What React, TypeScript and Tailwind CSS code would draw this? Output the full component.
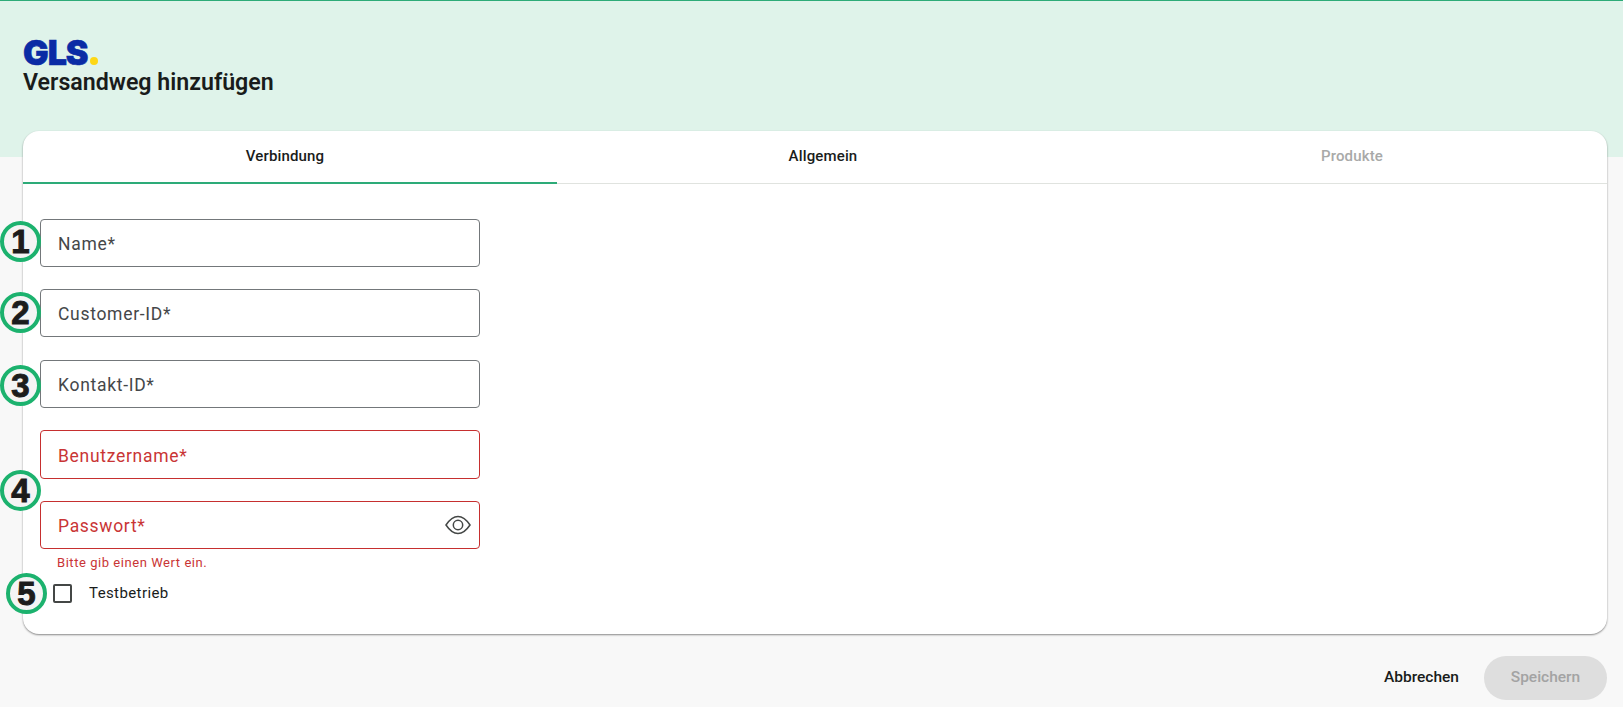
import React from "react";

function Badge({ n, className }: { n: string; className: string }) {
  return (
    <div
      className={
        "absolute flex items-center justify-center w-[41px] h-[41px] rounded-full border-[4px] border-[#1cb26e] bg-[#f4f4f4] text-[#1c1c1c] text-[33px] font-bold leading-none [-webkit-text-stroke:1px_#1c1c1c] [font-family:'Liberation_Sans',sans-serif] " +
        className
      }
    >
      {n}
    </div>
  );
}

function Field({ label, error, eye, className }: { label: string; error?: boolean; eye?: boolean; className: string }) {
  return (
    <div
      className={
        "relative flex items-center justify-between w-[440px] pl-[17px] pr-[8px] bg-white rounded-[4px] border text-[17.5px] tracking-[0.7px] " +
        (error ? "border-[#c62f2f] text-[#c93535] " : "border-[#73777a] text-[#454749] ") +
        className
      }
    >
      <span className="pt-[3px]">{label}</span>
      {eye && (
        <svg width="26" height="26" viewBox="0 0 26 26" fill="none" stroke="#444746" strokeWidth="1.5">
          <path d="M1 13 C 5 7 9 4.5 13 4.5 C 17 4.5 21 7 25 13 C 21 19 17 21.5 13 21.5 C 9 21.5 5 19 1 13 Z" />
          <circle cx="13" cy="13" r="4.7" />
        </svg>
      )}
    </div>
  );
}

export default function App() {
  return (
    <div className="relative h-[707px] w-full overflow-hidden bg-[#f8f8f8] [font-family:Roboto,sans-serif]">
      <header className="h-[157px] bg-[#dff3ea] border-t border-[#2dab78] pl-[23px] pt-[39px]">
        <div className="flex items-end h-[26px] text-[#0a2ba5] text-[34px] font-black tracking-[-1px] [-webkit-text-stroke:0.6px_#0a2ba5] [font-family:Inter,sans-serif]">
          <span className="leading-[26px]">GLS</span>
          <span className="mb-[1px] ml-[2px] w-[8px] h-[8px] rounded-full bg-[#fdd716]" />
        </div>
        <h1 className="text-[23.2px] leading-[28px] font-semibold text-[#191c1b] mt-[2px]">Versandweg hinzufügen</h1>
      </header>

      <main className="relative -mt-[26px] ml-[23px] mr-[16px] h-[503px] bg-white rounded-[16px] shadow-[0_1px_2px_rgba(0,0,0,0.45)]">
        <div className="grid grid-cols-[534px_532px_1fr] h-[53px] border-b border-[#e0e3df] text-[15px] tracking-[0.15px] font-medium">
          <div className="flex items-center justify-center pr-[10px] text-[#191c1b] border-b-[2px] border-[#2dab78] -mb-px h-[53px]">Verbindung</div>
          <div className="flex items-center justify-center text-[#191c1b] h-[50px]">Allgemein</div>
          <div className="flex items-center justify-center pl-[8px] text-[#a8a9a8] h-[50px]">Produkte</div>
        </div>

        <div className="flex flex-col pl-[17px] pt-[35px]">
          <Field label="Name*" className="h-[48px]" />
          <Field label="Customer-ID*" className="h-[48px] mt-[22px]" />
          <Field label="Kontakt-ID*" className="h-[48px] mt-[23px]" />
          <Field label="Benutzername*" error className="h-[49px] mt-[22px]" />
          <Field label="Passwort*" error eye className="h-[48px] mt-[22px]" />
          <p className="pl-[17px] mt-[6px] text-[13px] leading-[16px] tracking-[0.55px] text-[#c93535]">Bitte gib einen Wert ein.</p>
          <label className="flex items-center ml-[13px] mt-[12px] text-[15px] tracking-[0.4px] text-[#191c1b]">
            <span className="w-[19px] h-[19px] rounded-[2px] border-[2px] border-[#444746]" />
            <span className="ml-[17px] -mt-[1px]">Testbetrieb</span>
          </label>
        </div>
      </main>

      <footer className="flex items-center justify-end mt-[22px] pr-[16px] text-[15.5px] font-medium">
        <button className="mr-[25px] text-[#191c1b]">Abbrechen</button>
        <button className="w-[123px] h-[44px] rounded-full bg-[#dedede] text-[#a3a3a3]">Speichern</button>
      </footer>

      <Badge n="1" className="left-0 top-[221px]" />
      <Badge n="2" className="left-0 top-[292px]" />
      <Badge n="3" className="left-0 top-[365px]" />
      <Badge n="4" className="left-0 top-[470px]" />
      <Badge n="5" className="left-[6px] top-[573px]" />
    </div>
  );
}
